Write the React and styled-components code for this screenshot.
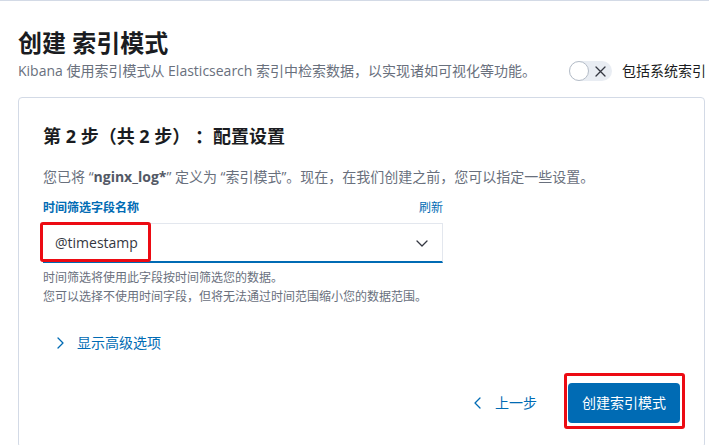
import React from "react";
import styled, { createGlobalStyle } from "styled-components";

const GlobalStyle = createGlobalStyle`
  html, body { margin: 0; padding: 0; overflow: hidden; background: #ffffff; }
  body {
    font-family: "Open Sans", "Noto Sans CJK SC", sans-serif;
    color: #1a1c21;
    -webkit-font-smoothing: antialiased;
  }
  * { box-sizing: border-box; }
`;

const BLUE = "#006bb4";
const RED = "#ec0b13";

const Page = styled.div`
  width: 709px;
  height: 445px;
  overflow: hidden;
  border-top: 1px solid #d3dae6;
  padding: 26px 4px 0 18px;
`;

const Header = styled.div`
  display: flex;
  align-items: flex-end;
  margin-right: -1px;
`;

const HeaderText = styled.div`
  flex: 1;
  min-width: 0;
`;

const Title = styled.h1`
  margin: 0;
  font-size: 24px;
  line-height: 32px;
  font-weight: 700;
  color: #1a1c21;
`;

const Subtitle = styled.p`
  margin: 2px 0 0;
  font-size: 14px;
  line-height: 20px;
  color: #69707d;
  white-space: nowrap;
`;

const ToggleGroup = styled.label`
  display: flex;
  align-items: center;
  gap: 10px;
  height: 20px;
  font-size: 14px;
  line-height: 20px;
  color: #1a1c21;
  white-space: nowrap;
`;

const Switch = styled.span`
  position: relative;
  width: 43px;
  height: 20px;
  border-radius: 10px;
  background: #e9edf3;
  display: flex;
  align-items: center;
  justify-content: flex-end;
  padding-right: 6px;
`;

const Knob = styled.span`
  position: absolute;
  left: 0;
  top: 0;
  width: 20px;
  height: 20px;
  border-radius: 50%;
  background: #ffffff;
  border: 1px solid #b4bcc7;
`;

const Panel = styled.section`
  margin-top: 16px;
  border: 1px solid #d3dae6;
  border-radius: 4px;
  padding: 26px 24px 24px;
  background: #ffffff;
`;

const StepTitle = styled.h2`
  margin: 0;
  font-size: 18px;
  line-height: 24px;
  font-weight: 700;
  color: #1a1c21;
  white-space: pre;
`;

const Description = styled.p`
  margin: 19px 0 0;
  font-size: 14px;
  line-height: 20px;
  color: #69707d;
  white-space: nowrap;
`;

const Strong = styled.strong`
  color: #535966;
  font-weight: 700;
`;

const FormRow = styled.div`
  width: 400px;
  margin-top: 13px;
`;

const LabelRow = styled.div`
  display: flex;
  justify-content: space-between;
  align-items: center;
  height: 16px;
  margin-bottom: 7px;
`;

const Label = styled.span`
  font-size: 12px;
  line-height: 16px;
  font-weight: 700;
  color: ${BLUE};
`;

const Link = styled.span`
  font-size: 12px;
  line-height: 16px;
  color: ${BLUE};
`;

const SelectWrap = styled.div`
  position: relative;
`;

const Select = styled.div`
  height: 40px;
  display: flex;
  align-items: center;
  justify-content: space-between;
  padding: 0 12px 0 12px;
  background: #ffffff;
  border: 1px solid #e3e7ee;
  border-left: none;
  border-bottom: 2px solid ${BLUE};
  font-size: 14px;
  color: #343741;
`;

const Highlight = styled.span`
  position: absolute;
  left: ${(p) => p.$left}px;
  top: ${(p) => p.$top}px;
  width: ${(p) => p.$width}px;
  height: ${(p) => p.$height}px;
  border: 3px solid ${RED};
  border-radius: 3px;
  pointer-events: none;
`;

const Help = styled.div`
  margin-top: 5px;
  font-size: 12px;
  line-height: 19px;
  color: #69707d;
`;

const Advanced = styled.div`
  margin-top: 27px;
  display: flex;
  align-items: center;
  gap: 9px;
  padding-left: 9px;
  font-size: 14px;
  line-height: 20px;
  color: ${BLUE};
`;

const Footer = styled.div`
  margin-top: 30px;
  display: flex;
  justify-content: flex-end;
  align-items: center;
  gap: 31px;
`;

const BackButton = styled.span`
  display: flex;
  align-items: center;
  gap: 9px;
  font-size: 14px;
  line-height: 20px;
  color: ${BLUE};
`;

const PrimaryWrap = styled.div`
  position: relative;
`;

const PrimaryButton = styled.button`
  width: 112px;
  height: 40px;
  border: none;
  border-radius: 4px;
  background: ${BLUE};
  color: #ffffff;
  font-family: inherit;
  font-size: 14px;
  line-height: 20px;
  padding: 0;
`;

const Chevron = ({ dir, color, size = 16 }) => {
  const pts = {
    down: "3,6 8,11 13,6",
    right: "6,3 11,8 6,13",
    left: "10,3 5,8 10,13",
  }[dir];
  return (
    <svg width={size} height={size} viewBox="0 0 16 16" fill="none">
      <polyline points={pts} stroke={color} strokeWidth="1.3" strokeLinecap="round" strokeLinejoin="round" />
    </svg>
  );
};

const CrossIcon = () => (
  <svg width="11" height="11" viewBox="0 0 11 11" fill="none">
    <path d="M1 1 L10 10 M10 1 L1 10" stroke="#343741" strokeWidth="1.3" strokeLinecap="round" />
  </svg>
);

export default function App() {
  return (
    <>
      <GlobalStyle />
      <Page>
        <Header>
          <HeaderText>
            <Title>创建 索引模式</Title>
            <Subtitle>Kibana 使用索引模式从 Elasticsearch 索引中检索数据，以实现诸如可视化等功能。</Subtitle>
          </HeaderText>
          <ToggleGroup>
            <Switch>
              <Knob />
              <CrossIcon />
            </Switch>
            包括系统索引
          </ToggleGroup>
        </Header>

        <Panel>
          <StepTitle>第 2 步（共 2 步） ：配置设置</StepTitle>
          <Description>
            您已将 “<Strong>nginx_log*</Strong>” 定义为 “索引模式”。现在，在我们创建之前，您可以指定一些设置。
          </Description>

          <FormRow>
            <LabelRow>
              <Label>时间筛选字段名称</Label>
              <Link>刷新</Link>
            </LabelRow>
            <SelectWrap>
              <Select>
                <span>@timestamp</span>
                <Chevron dir="down" color="#343741" />
              </Select>
              <Highlight $left={-3} $top={-1} $width={111} $height={40} />
            </SelectWrap>
            <Help>
              时间筛选将使用此字段按时间筛选您的数据。
              <br />
              您可以选择不使用时间字段，但将无法通过时间范围缩小您的数据范围。
            </Help>
          </FormRow>

          <Advanced>
            <Chevron dir="right" color={BLUE} />
            显示高级选项
          </Advanced>

          <Footer>
            <BackButton>
              <Chevron dir="left" color={BLUE} />
              上一步
            </BackButton>
            <PrimaryWrap>
              <PrimaryButton>创建索引模式</PrimaryButton>
              <Highlight $left={-4} $top={-10} $width={121} $height={56} />
            </PrimaryWrap>
          </Footer>
        </Panel>
      </Page>
    </>
  );
}
